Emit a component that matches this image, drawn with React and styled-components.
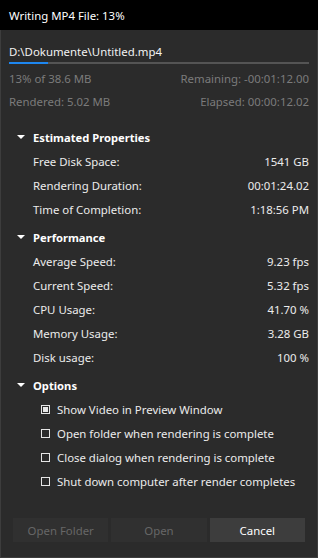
import React from "react";
import styled, { createGlobalStyle } from "styled-components";

const GlobalStyle = createGlobalStyle`
  html, body {
    margin: 0;
    padding: 0;
    background: #2b2b2b;
  }
  * {
    box-sizing: border-box;
  }
`;

const estimated = [
  ["Free Disk Space:", "1541 GB"],
  ["Rendering Duration:", "00:01:24.02"],
  ["Time of Completion:", "1:18:56 PM"],
];

const performance = [
  ["Average Speed:", "9.23 fps"],
  ["Current Speed:", "5.32 fps"],
  ["CPU Usage:", "41.70 %"],
  ["Memory Usage:", "3.28 GB"],
  ["Disk usage:", "100 %"],
];

const options = [
  ["Show Video in Preview Window", true],
  ["Open folder when rendering is complete", false],
  ["Close dialog when rendering is complete", false],
  ["Shut down computer after render completes", false],
];

const Section = ({ title, first, children }) => (
  <SectionBox $first={first}>
    <SectionHeader>
      <Caret />
      {title}
    </SectionHeader>
    {children}
  </SectionBox>
);

const App = () => {
  const progress = 13;

  return (
    <>
      <GlobalStyle />
      <Window>
        <TitleBar>Writing MP4 File: {progress}%</TitleBar>
        <Body>
          <FilePath>D:\Dokumente\Untitled.mp4</FilePath>
          <Track>
            <Fill style={{ width: `${progress}%` }} />
          </Track>
          <Stats>
            <StatRow>
              <span>13% of 38.6 MB</span>
              <span>Remaining: -00:01:12.00</span>
            </StatRow>
            <StatRow>
              <span>Rendered: 5.02 MB</span>
              <span>Elapsed: 00:00:12.02</span>
            </StatRow>
          </Stats>

          <Section title="Estimated Properties" first>
            {estimated.map(([label, value]) => (
              <PropRow key={label}>
                <span>{label}</span>
                <span>{value}</span>
              </PropRow>
            ))}
          </Section>

          <Section title="Performance">
            {performance.map(([label, value]) => (
              <PropRow key={label}>
                <span>{label}</span>
                <span>{value}</span>
              </PropRow>
            ))}
          </Section>

          <Section title="Options">
            {options.map(([label, checked]) => (
              <CheckRow key={label}>
                <Box $checked={checked} />
                {label}
              </CheckRow>
            ))}
          </Section>
        </Body>
        <ButtonBar>
          <Button disabled>Open Folder</Button>
          <Button disabled>Open</Button>
          <Button>Cancel</Button>
        </ButtonBar>
      </Window>
    </>
  );
};

const Window = styled.div`
  width: 318px;
  height: 558px;
  border: 1px solid #3d3d3d;
  border-top: none;
  background: #2b2b2b;
  display: flex;
  flex-direction: column;
  font-family: "Segoe UI", "Noto Sans", "Open Sans", sans-serif;
  font-size: 11.4px;
  color: #f2f2f2;
`;

const TitleBar = styled.div`
  height: 30px;
  margin: 0 -1px;
  padding: 0 9px;
  background: #000;
  color: #fff;
  display: flex;
  align-items: center;
`;

const Body = styled.div`
  padding: 14px 8px 0 8px;
  display: flex;
  flex-direction: column;
  white-space: nowrap;
`;

const FilePath = styled.div`
  height: 16px;
  line-height: 16px;
  color: #f2f2f2;
`;

const Track = styled.div`
  margin-top: 2px;
  height: 2px;
  background: #545454;
`;

const Fill = styled.div`
  height: 100%;
  background: #1e87f0;
`;

const Stats = styled.div`
  margin-top: 3px;
  display: flex;
  flex-direction: column;
`;

const StatRow = styled.div`
  height: 23px;
  display: flex;
  align-items: center;
  justify-content: space-between;
  color: #7b7b7b;
`;

const SectionBox = styled.div`
  margin-top: ${(p) => (p.$first ? "12px" : "4px")};
  display: flex;
  flex-direction: column;
`;

const SectionHeader = styled.div`
  height: 24px;
  display: flex;
  align-items: center;
  font-weight: 700;
  font-size: 11.2px;
  color: #fff;
`;

const Caret = styled.span`
  width: 0;
  height: 0;
  margin: 0 8px 0 8px;
  border-left: 4px solid transparent;
  border-right: 4px solid transparent;
  border-top: 4px solid #fff;
`;

const PropRow = styled.div`
  height: 24px;
  padding-left: 24px;
  display: flex;
  align-items: center;
  justify-content: space-between;
  color: #ececec;
`;

const CheckRow = styled.div`
  height: 24px;
  padding-left: 32px;
  display: flex;
  align-items: center;
  gap: 7px;
  color: #ececec;
`;

const Box = styled.span`
  width: 9px;
  height: 9px;
  flex: none;
  border: 1px solid #e6e6e6;
  display: flex;
  align-items: center;
  justify-content: center;

  &::after {
    content: "";
    width: 5px;
    height: 5px;
    background: ${(p) => (p.$checked ? "#e6e6e6" : "transparent")};
  }
`;

const ButtonBar = styled.div`
  margin-top: auto;
  padding: 0 12px 15px 12px;
  display: flex;
  gap: 3px;
`;

const Button = styled.button`
  flex: 1;
  height: 24px;
  border: none;
  border-radius: 0;
  padding: 0;
  font-family: inherit;
  font-size: 11.4px;
  background: #3d3d3d;
  color: #fff;

  &:disabled {
    background: #303030;
    color: #676767;
  }
`;

export default App;
